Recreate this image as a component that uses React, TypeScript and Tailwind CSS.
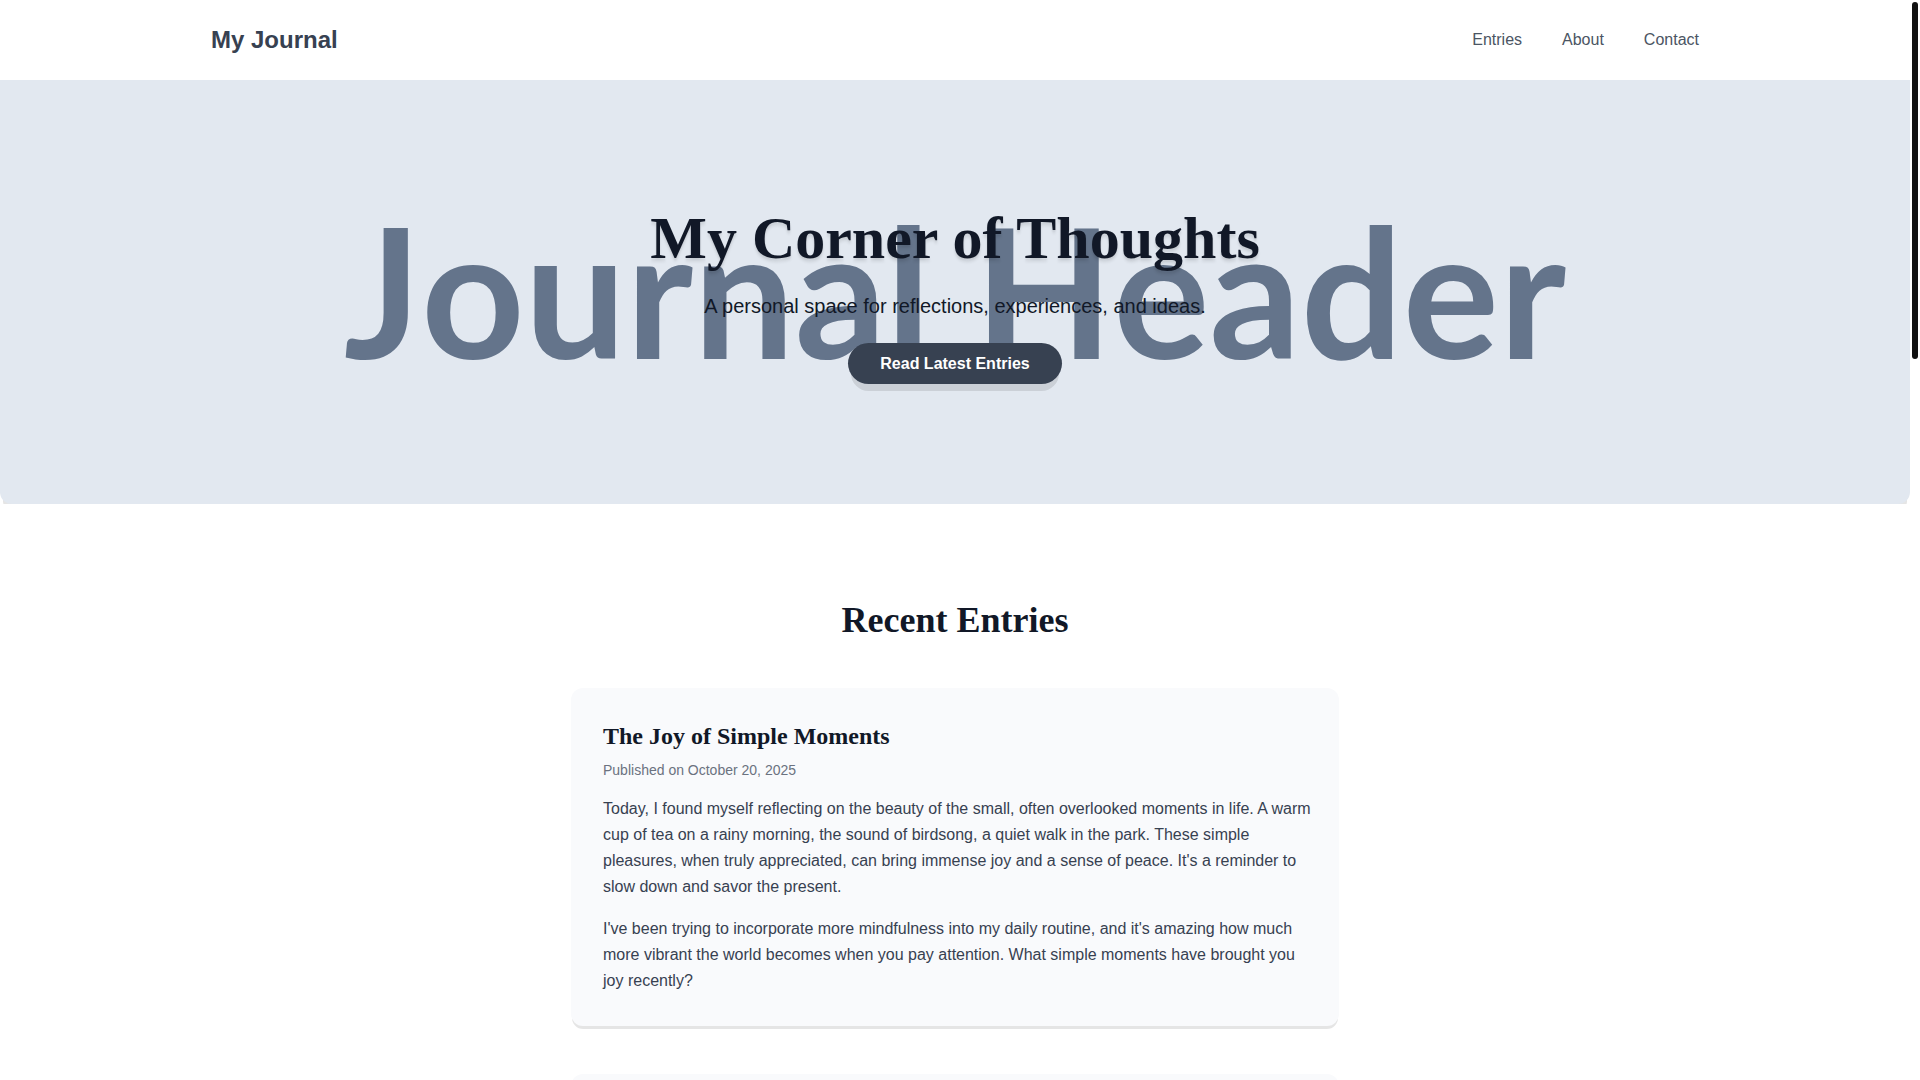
import React from 'react';

interface Entry {
  title: string;
  date: string;
  paragraphs: string[];
}

const navLinks = [
  { label: 'Entries', href: '#entries' },
  { label: 'About', href: '#about' },
  { label: 'Contact', href: '#contact' },
];

const entries: Entry[] = [
  {
    title: 'The Joy of Simple Moments',
    date: 'October 20, 2025',
    paragraphs: [
      "Today, I found myself reflecting on the beauty of the small, often overlooked moments in life. A warm cup of tea on a rainy morning, the sound of birdsong, a quiet walk in the park. These simple pleasures, when truly appreciated, can bring immense joy and a sense of peace. It's a reminder to slow down and savor the present.",
      "I've been trying to incorporate more mindfulness into my daily routine, and it's amazing how much more vibrant the world becomes when you pay attention. What simple moments have brought you joy recently?",
    ],
  },
];

const cardClass = 'rounded-xl bg-[#f9fafc] py-8 pl-8 pr-6 shadow-[0_4px_0_-1px_rgba(0,0,0,0.1)]';

const Header: React.FC = () => (
  <header className="bg-white">
    <div className="mx-auto flex max-w-screen-2xl items-center justify-between p-6">
      <a href="#top" className="text-2xl font-bold text-[#374151]">
        My Journal
      </a>
      <nav className="flex gap-10">
        {navLinks.map((link) => (
          <a key={link.href} href={link.href} className="text-base text-[#4b5563]">
            {link.label}
          </a>
        ))}
      </nav>
    </div>
  </header>
);

const Hero: React.FC = () => (
  <section className="relative rounded-b-xl bg-[#e2e8f0] px-6 py-32 text-center shadow-[0_10px_0_-3px_rgba(0,0,0,0.1)]">
    {/* Oversized backdrop lettering */}
    <div
      aria-hidden="true"
      className="absolute inset-0 flex items-center justify-center overflow-hidden pb-1.5 whitespace-nowrap font-['Lato'] text-[180px] leading-none font-bold text-[#64748b] [font-kerning:none]"
    >
      Journal Header
    </div>
    <div className="relative">
      <h1 className="mb-6 font-['Liberation_Serif',serif] text-6xl leading-none font-bold text-[#111827] [text-shadow:0_4px_3px_rgba(0,0,0,0.07),0_2px_2px_rgba(0,0,0,0.06)]">
        My Corner of Thoughts
      </h1>
      <p className="mb-8 text-xl text-[#111827]">
        A personal space for reflections, experiences, and ideas.
      </p>
      <a
        href="#entries"
        className="rounded-full bg-[#374151] px-8 py-3 font-bold text-white shadow-[0_10px_0_-3px_rgba(0,0,0,0.1)]"
      >
        Read Latest Entries
      </a>
    </div>
  </section>
);

const EntryCard: React.FC<{ entry: Entry }> = ({ entry }) => (
  <article className={cardClass}>
    <h3 className="mb-2 font-['Liberation_Serif',serif] text-2xl font-bold text-[#111827]">{entry.title}</h3>
    <p className="mb-4 text-sm text-[#6b7280]">Published on {entry.date}</p>
    <div className="flex flex-col gap-4 leading-[26px] text-[#374151]">
      {entry.paragraphs.map((text) => (
        <p key={text}>{text}</p>
      ))}
    </div>
  </article>
);

const App: React.FC = () => {
  return (
    <div className="flex h-screen overflow-hidden bg-white font-['Liberation_Sans',sans-serif] text-base">
      <div className="min-w-0 flex-1">
        <Header />
        <main>
          <Hero />
          <section id="entries" className="relative bg-white px-6 py-24">
            <h2 className="mb-12 text-center font-['Liberation_Serif',serif] text-4xl font-bold text-[#111827]">
              Recent Entries
            </h2>
            <div className="mx-auto flex max-w-3xl flex-col gap-12">
              {entries.map((entry) => (
                <EntryCard key={entry.title} entry={entry} />
              ))}
              <article className={cardClass} />
            </div>
          </section>
        </main>
      </div>

      {/* Scroll track */}
      <div className="w-2.5 shrink-0 p-0.5">
        <div className="h-[357px] rounded-full bg-[#111111]" />
      </div>
    </div>
  );
};

export default App;
